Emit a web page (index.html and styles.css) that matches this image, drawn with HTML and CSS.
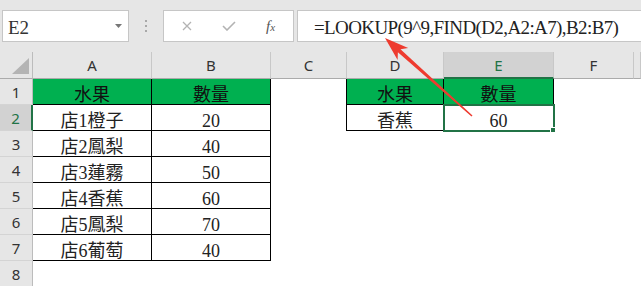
FILE: index.html
```html
<!DOCTYPE html>
<html>
<head>
<meta charset="utf-8"/>
<title>LOOKUP FIND</title>
<link rel="stylesheet" href="styles.css">
</head>
<body>
<div class="page">

<div class="formula-bar">
    <div class="name-box">
        <span>E2</span>
        <svg class="caret" width="7" height="4" viewBox="0 0 7 4"><path d="M0 0h7L3.5 4z" fill="#777"/></svg>
    </div>
    <div class="grip"><i></i><i></i><i></i></div>
    <div class="tools">
        <svg width="10" height="10" viewBox="0 0 10 10"><path d="M1 1l8 8M9 1l-8 8" stroke="#b3b3b3" stroke-width="1.3" fill="none"/></svg>
        <svg class="check" width="14" height="10" viewBox="0 0 14 10"><path d="M1 5l4 4 8-8" stroke="#b3b3b3" stroke-width="1.6" fill="none"/></svg>
        <span class="fx"><i>f</i><i class="fx-x">x</i></span>
    </div>
    <div class="formula">=LOOKUP(9^9,FIND(D2,A2:A7),B2:B7)</div>
</div>

<div class="sheet">
    <!-- column headers -->
    <div class="corner"><svg width="17" height="16" viewBox="0 0 17 16"><path d="M17 0V16H0z" fill="#b4b4b4"/></svg></div>
    <div class="col-head">A</div>
    <div class="col-head">B</div>
    <div class="col-head">C</div>
    <div class="col-head">D</div>
    <div class="col-head col-sel">E</div>
    <div class="col-head">F</div>
    <div class="col-head"></div>

    <!-- row 1 -->
    <div class="row-head">1</div>
    <div class="cell bx green">水果</div>
    <div class="cell bx green">數量</div>
    <div class="cell edge"></div>
    <div class="cell bx green">水果</div>
    <div class="cell bx green">數量</div>
    <div class="cell"></div>
    <div class="cell"></div>

    <!-- row 2 -->
    <div class="row-head row-sel">2</div>
    <div class="cell bx">店1橙子</div>
    <div class="cell bx">20</div>
    <div class="cell edge"></div>
    <div class="cell bx">香蕉</div>
    <div class="cell bx sel">60</div>
    <div class="cell"></div>
    <div class="cell"></div>

    <!-- row 3 -->
    <div class="row-head">3</div>
    <div class="cell bx">店2鳳梨</div>
    <div class="cell bx">40</div>
    <div class="cell"></div>
    <div class="cell"></div>
    <div class="cell"></div>
    <div class="cell"></div>
    <div class="cell"></div>

    <!-- row 4 -->
    <div class="row-head">4</div>
    <div class="cell bx">店3蓮霧</div>
    <div class="cell bx">50</div>
    <div class="cell"></div>
    <div class="cell"></div>
    <div class="cell"></div>
    <div class="cell"></div>
    <div class="cell"></div>

    <!-- row 5 -->
    <div class="row-head">5</div>
    <div class="cell bx">店4香蕉</div>
    <div class="cell bx">60</div>
    <div class="cell"></div>
    <div class="cell"></div>
    <div class="cell"></div>
    <div class="cell"></div>
    <div class="cell"></div>

    <!-- row 6 -->
    <div class="row-head">6</div>
    <div class="cell bx">店5鳳梨</div>
    <div class="cell bx">70</div>
    <div class="cell"></div>
    <div class="cell"></div>
    <div class="cell"></div>
    <div class="cell"></div>
    <div class="cell"></div>

    <!-- row 7 -->
    <div class="row-head">7</div>
    <div class="cell bx">店6葡萄</div>
    <div class="cell bx">40</div>
    <div class="cell"></div>
    <div class="cell"></div>
    <div class="cell"></div>
    <div class="cell"></div>
    <div class="cell"></div>

    <!-- row 8 -->
    <div class="row-head">8</div>
    <div class="cell"></div>
    <div class="cell"></div>
    <div class="cell"></div>
    <div class="cell"></div>
    <div class="cell"></div>
    <div class="cell"></div>
    <div class="cell"></div>
</div>

<!-- red call-out arrow pointing at the formula -->
<svg class="arrow" viewBox="0 0 641 286">
    <path d="M385 38L408.2 48L400.5 49.2L472.5 115.5L471.5 116.5L397.9 52.2L397.6 60Z" fill="#ee3b2f"/>
</svg>

</div>
</body>
</html>
```

FILE: styles.css
```css
body {
    margin: 0;
    background: #fff;
}
.page {
    position: relative;
    width: 641px;
    height: 286px;
    overflow: hidden;
}

/* formula bar */
.formula-bar {
    display: flex;
    align-items: flex-start;
    height: 52px;
    box-sizing: border-box;
    padding: 10px 0 0 2px;
    background: #e6e6e6;
    font-family: "Liberation Serif", serif;
}
.name-box,
.grip,
.tools {
    flex-shrink: 0;
}
.name-box {
    display: flex;
    align-items: center;
    justify-content: space-between;
    width: 127px;
    height: 32px;
    box-sizing: border-box;
    border: 1px solid #c6c6c6;
    background: #fff;
    padding: 3px 6px 0 5px;
    font-size: 19px;
    color: #333;
}
.caret {
    margin-top: -3px;
}
.grip {
    display: flex;
    flex-direction: column;
    gap: 3px;
    margin: 10px 16px 0 16px;
}
.grip i {
    display: block;
    width: 2px;
    height: 2px;
    background: #a8a8a8;
}
.tools {
    display: flex;
    align-items: center;
    width: 131px;
    height: 32px;
    box-sizing: border-box;
    border: 1px solid #c6c6c6;
    background: #fff;
    padding-left: 18px;
}
.check {
    margin-left: 30px;
}
.fx {
    margin-left: 30px;
    font-size: 15px;
    color: #555;
}
.fx-x {
    font-size: 11px;
}
.formula {
    flex: 1 0 auto;
    min-width: 360px;
    height: 32px;
    box-sizing: border-box;
    margin-left: 3px;
    border: 1px solid #c6c6c6;
    border-right: none;
    background: #fff;
    padding: 4px 0 0 16px;
    line-height: 26px;
    font-size: 19px;
    letter-spacing: -0.6px;
    color: #222;
    white-space: nowrap;
}

/* worksheet */
.sheet {
    display: grid;
    grid-template-columns: 33px 119px 119px 76px 97px 110px 80px 1fr;
    grid-template-rows: 27px repeat(8, 26px);
}
.corner,
.col-head,
.row-head {
    box-sizing: border-box;
    background: #e6e6e6;
    font-family: "Noto Sans", sans-serif;
    font-size: 15px;
    color: #333;
}
.corner {
    display: flex;
    align-items: flex-end;
    justify-content: flex-end;
    padding: 0 3px 4px 0;
    border-right: 1px solid #bcbcbc;
    border-bottom: 1px solid #ababab;
}
.col-head {
    display: flex;
    align-items: center;
    justify-content: center;
    border-right: 1px solid #c8c8c8;
    border-bottom: 1px solid #ababab;
}
.col-sel {
    background: #d2d2d2;
    color: #217346;
    border-bottom: 2px solid #217346;
}
.row-head {
    display: flex;
    align-items: center;
    justify-content: center;
    padding-top: 1px;
    border-right: 1px solid #bcbcbc;
    border-bottom: 1px solid #d4d4d4;
}
.row-sel {
    background: #d2d2d2;
    color: #217346;
    border-right: 2px solid #217346;
}
.cell {
    box-sizing: border-box;
    padding-top: 6px;
    line-height: 20px;
    text-align: center;
    font-family: "Liberation Serif", "Noto Sans CJK TC", serif;
    font-size: 18px;
    color: #222;
    white-space: nowrap;
}
.bx {
    border-right: 1px solid #000;
    border-bottom: 1px solid #000;
}
.edge {
    border-right: 1px solid #000;
}
.green {
    background: #00b050;
    color: #111;
}
.sel {
    position: relative;
    outline: 2px solid #217346;
    outline-offset: -1px;
}
.sel::after {
    content: "";
    position: absolute;
    right: -3px;
    bottom: -3px;
    width: 6px;
    height: 6px;
    background: #217346;
    border: 1px solid #fff;
    box-sizing: border-box;
}

.arrow {
    position: absolute;
    left: 0;
    top: 0;
    width: 641px;
    height: 286px;
    pointer-events: none;
}
```
